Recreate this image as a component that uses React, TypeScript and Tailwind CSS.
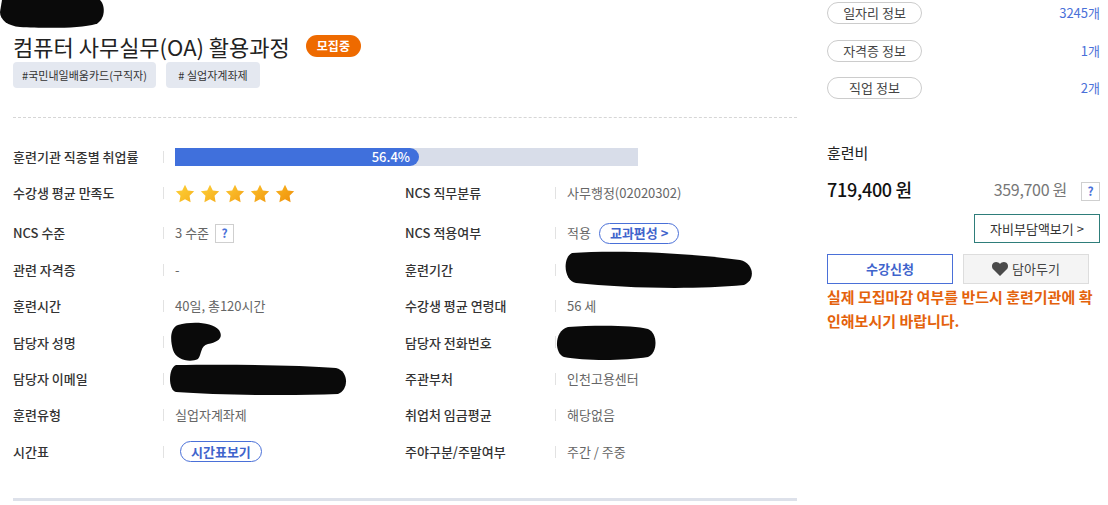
import React from 'react';

const font = { fontFamily: '"Noto Sans CJK KR", "Noto Sans", sans-serif' };

const Blob = ({ w, h, d }: { w: number; h: number; d: string }) => (
  <svg width={w} height={h} viewBox={`0 0 ${w} ${h}`} className="block">
    <path d={d} fill="#0a0a0a" />
  </svg>
);

const Star = ({ from, to, id }: { from: string; to: string; id: string }) => (
  <svg width="20" height="19" viewBox="0 0 24 23">
    <defs>
      <linearGradient id={id} x1="0" y1="0" x2="1" y2="1">
        <stop offset="0%" stopColor={from} />
        <stop offset="100%" stopColor={to} />
      </linearGradient>
    </defs>
    <path d="M12 0.8l3.4 7 7.7 1.1-5.6 5.4 1.3 7.7L12 18.4 5.2 22l1.3-7.7L0.9 8.9l7.7-1.1z" fill={`url(#${id})`} />
  </svg>
);

const Divider = () => <span className="w-px h-3 bg-[#e2e2e2] shrink-0" />;

const Help = () => (
  <span className="inline-flex items-center justify-center w-[19px] h-[19px] border border-[#cfcfcf] text-[12px] font-bold text-[#4a70d8] leading-none">?</span>
);

const Cell = ({ label, children }: { label: string; children?: React.ReactNode }) => (
  <div className="flex items-center w-[392px]">
    <div className="w-[150px] text-[13px] font-medium text-[#333]">{label}</div>
    <Divider />
    <div className="pl-[11px] flex items-center gap-[6px] text-[13px] text-[#666] relative">{children}</div>
  </div>
);

const Row = ({ children, className = 'h-[36.4px]' }: { children: React.ReactNode; className?: string }) => (
  <div className={`flex items-center ${className}`}>{children}</div>
);

const Pill = ({ children, className = '' }: { children: React.ReactNode; className?: string }) => (
  <span className={`inline-flex items-center h-[21px] px-[10px] rounded-full border border-[#4a70d8] text-[13px] font-bold text-[#3f64cc] ${className}`}>{children}</span>
);

export default function App() {
  return (
    <div className="w-[1108px] h-[505px] bg-white flex overflow-hidden" style={font}>
      {/* left */}
      <div className="w-[797px] shrink-0">
        <div className="h-[31px]">
          <Blob w={106} h={29} d="M2 0 H100 C106 6 105 20 96 24 C80 29 40 28 20 27 C8 26 0 20 0 12 Z" />
        </div>
        <div className="pl-[13px]">
          <div className="flex items-center h-[30px] gap-[16px]">
            <h1 className="text-[22px] text-[#222] leading-none">컴퓨터 사무실무(OA) 활용과정</h1>
            <span className="inline-flex items-center h-[22px] px-[11px] rounded-full bg-[#ee6a00] text-white text-[12px] font-bold">모집중</span>
          </div>
          <div className="flex gap-[10px] mt-[1px]">
            <span className="inline-flex items-center justify-center w-[143px] h-[26px] rounded-[4px] bg-[#e4e8f0] text-[11px] text-[#333]">#국민내일배움카드(구직자)</span>
            <span className="inline-flex items-center justify-center w-[94px] h-[26px] rounded-[4px] bg-[#e4e8f0] text-[11px] text-[#333]"># 실업자계좌제</span>
          </div>
          <div className="mt-[29px] border-t border-dashed border-[#d6d6d6]" />

          <div className="mt-[21px]">
            <Row className="h-[36px]">
              <div className="w-[150px] text-[13px] font-medium text-[#333]">훈련기관 직종별 취업률</div>
              <Divider />
              <div className="ml-[11px] w-[463px] h-[18px] bg-[#d8dde9]">
                <div className="w-[244px] h-full bg-[#4070dc] rounded-r-full flex items-center justify-end pr-[9px] text-white text-[13px] font-medium">56.4%</div>
              </div>
            </Row>
            <Row className="h-[36px]">
              <Cell label="수강생 평균 만족도">
                <div className="flex gap-[5px]">
                  <Star id="s1" from="#fdd13a" to="#f7b21c" />
                  <Star id="s2" from="#fdd03c" to="#f6ac1a" />
                  <Star id="s3" from="#fcc733" to="#f4a114" />
                  <Star id="s4" from="#fbc02b" to="#f29a10" />
                  <Star id="s5" from="#f9b420" to="#ef8f0a" />
                </div>
              </Cell>
              <Cell label="NCS 직무분류">사무행정(02020302)</Cell>
            </Row>
            <Row className="h-[36.4px] mt-[4px]">
              <Cell label="NCS 수준">
                3 수준 <Help />
              </Cell>
              <Cell label="NCS 적용여부">
                적용 <Pill className="ml-[2px]">교과편성 &gt;</Pill>
              </Cell>
            </Row>
            <Row>
              <Cell label="관련 자격증">-</Cell>
              <Cell label="훈련기간">
                <span className="absolute left-[6px] -top-[20px]">
                  <Blob w={192} h={39} d="M10 3 C50 0 120 2 178 10 C192 13 194 30 182 35 C130 40 60 38 14 33 C2 31 0 8 10 3 Z" />
                </span>
              </Cell>
            </Row>
            <Row>
              <Cell label="훈련시간">40일, 총120시간</Cell>
              <Cell label="수강생 평균 연령대">56 세</Cell>
            </Row>
            <Row>
              <Cell label="담당자 성명">
                <span className="absolute left-[6px] -top-[20px]">
                  <Blob w={52} h={40} d="M8 3 C22 -1 42 0 49 8 C54 16 48 20 38 22 C30 24 32 32 28 37 C20 41 6 38 3 28 C0 18 0 6 8 3 Z" />
                </span>
              </Cell>
              <Cell label="담당자 전화번호">
                <span className="absolute -left-[2px] -top-[17px]">
                  <Blob w={103} h={36} d="M14 2 C40 0 80 0 94 4 C104 8 104 28 94 32 C70 36 30 36 10 32 C0 28 0 6 14 2 Z" />
                </span>
              </Cell>
            </Row>
            <Row>
              <Cell label="담당자 이메일">
                <span className="absolute left-[4px] -top-[15px]">
                  <Blob w={180} h={32} d="M8 1 C60 0 130 1 168 4 C181 7 181 26 170 30 C120 32 50 31 8 28 C0 26 0 4 8 1 Z" />
                </span>
              </Cell>
              <Cell label="주관부처">인천고용센터</Cell>
            </Row>
            <Row>
              <Cell label="훈련유형">실업자계좌제</Cell>
              <Cell label="취업처 임금평균">해당없음</Cell>
            </Row>
            <Row>
              <Cell label="시간표">
                <Pill className="ml-[5px]">시간표보기</Pill>
              </Cell>
              <Cell label="주야구분/주말여부">주간 / 주중</Cell>
            </Row>
          </div>
          <div className="mt-[28px] h-[3px] bg-[#dde1ea]" />
        </div>
      </div>

      {/* right */}
      <div className="ml-[30px] w-[273px] shrink-0">
        <div className="pt-[2px] flex flex-col gap-[15.5px]">
          {[
            ['일자리 정보', '3245개'],
            ['자격증 정보', '1개'],
            ['직업 정보', '2개'],
          ].map(([k, v]) => (
            <div key={k} className="flex items-center justify-between h-[22px]">
              <span className="inline-flex items-center justify-center w-[95px] h-[22px] rounded-full border border-[#cccccc] text-[13px] text-[#444]">{k}</span>
              <span className="text-[13px] text-[#4a70d8]">{v}</span>
            </div>
          ))}
        </div>
        <div className="mt-[42px] text-[15px] text-[#222] leading-[24px]">훈련비</div>
        <div className="mt-[12px] flex items-center h-[24px]">
          <span className="text-[18px] text-[#111] font-medium tracking-[-0.3px]">719,400 원</span>
          <span className="ml-auto text-[16px] text-[#777] tracking-[-0.3px]">359,700 원</span>
          <span className="ml-[14px]"><Help /></span>
        </div>
        <div className="mt-[13px] flex justify-end">
          <span className="inline-flex items-center justify-center w-[126px] h-[29px] border border-[#2e7d7a] text-[13px] text-[#333]">자비부담액보기 &gt;</span>
        </div>
        <div className="mt-[11px] flex gap-[10px]">
          <span className="inline-flex items-center justify-center w-[126px] h-[30px] border border-[#4a70d8] text-[13px] font-bold text-[#3f64cc]">수강신청</span>
          <span className="inline-flex items-center justify-center gap-[4px] w-[126px] h-[30px] border border-[#dddddd] bg-[#f4f4f4] text-[13px] text-[#444]">
            <svg width="16" height="14" viewBox="0 0 24 21"><path d="M12 21 L2.2 11.4 C-0.8 8.4 -0.7 3.6 2.4 1.3 C5.3 -0.9 9.5 -0.2 12 3 C14.5 -0.2 18.7 -0.9 21.6 1.3 C24.7 3.6 24.8 8.4 21.8 11.4 Z" fill="#4a4a4a" /></svg>
            담아두기
          </span>
        </div>
        <p className="mt-[1px] text-[15px] font-bold text-[#e4620c] leading-[24px] w-[272px]">실제 모집마감 여부를 반드시 훈련기관에 확인해보시기 바랍니다.</p>
      </div>
    </div>
  );
}
